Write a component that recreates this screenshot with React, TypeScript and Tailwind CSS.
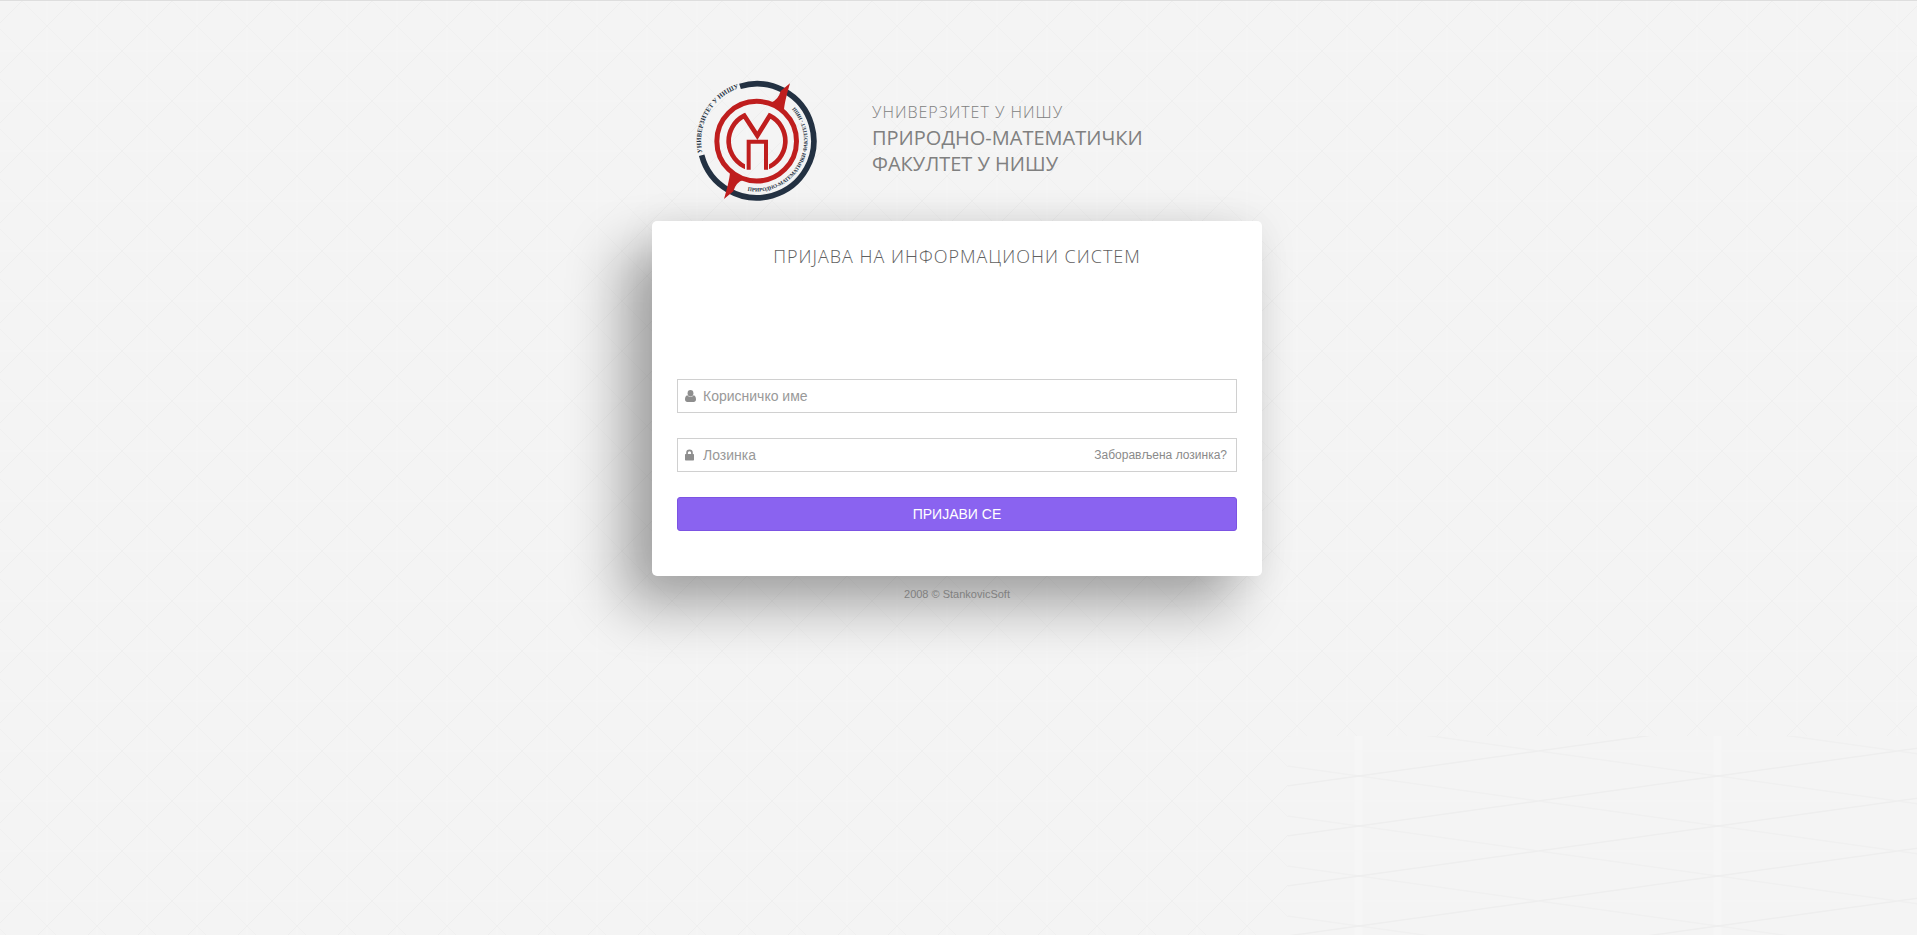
import { FormEvent, useState } from "react";

export default function App() {
  const [username, setUsername] = useState("");
  const [password, setPassword] = useState("");

  const onSubmit = (e: FormEvent) => e.preventDefault();

  return (
    <div className="relative isolate min-h-screen overflow-hidden border-t border-[#dedede] bg-[#f4f4f4] pt-[69px] pr-[19px] pl-4 font-['Liberation_Sans',Arial,sans-serif] text-[#8a8a8a]">
      <Backdrop />
      <div className="mx-auto w-full max-w-[610px]">
        <header className="flex items-center gap-[42px] pl-7 pb-[11px]">
          <Logo />
          <div className="pb-1 font-['Open_Sans',sans-serif] text-[#808080]">
            <p className="text-base leading-[26px] font-light tracking-[1px]">УНИВЕРЗИТЕТ У НИШУ</p>
            <p className="text-xl leading-[26px]">
              ПРИРОДНО-МАТЕМАТИЧКИ
              <br />
              ФАКУЛТЕТ У НИШУ
            </p>
          </div>
        </header>

        <main className="rounded-[5px] bg-white px-[25px] pt-[22px] pb-[45px] shadow-[0_0_40px_rgba(0,0,0,0.07),-30px_30px_55px_rgba(0,0,0,0.32)]">
          <h1 className="mb-[110px] text-center font-['Open_Sans',sans-serif] text-lg leading-[26px] font-light tracking-[1px] text-[#606060]">
            ПРИЈАВА НА ИНФОРМАЦИОНИ СИСТЕМ
          </h1>
          <form onSubmit={onSubmit} className="flex flex-col gap-[25px]">
            <label className="flex h-[34px] items-center border border-[#d0d0d0] px-[7px]">
              <UserIcon />
              <input
                type="text"
                aria-label="Корисничко име"
                placeholder="Корисничко име"
                value={username}
                onChange={(e) => setUsername(e.target.value)}
                className="min-w-0 flex-1 text-sm outline-none placeholder:text-[#999]"
              />
            </label>
            <div className="flex h-[34px] items-center border border-[#d0d0d0] pr-[9px] pl-[7px]">
              <LockIcon />
              <input
                type="password"
                aria-label="Лозинка"
                placeholder="Лозинка"
                value={password}
                onChange={(e) => setPassword(e.target.value)}
                className="min-w-0 flex-1 text-sm outline-none placeholder:text-[#999]"
              />
              <a href="#" className="text-xs">
                Заборављена лозинка?
              </a>
            </div>
            <button
              type="submit"
              className="h-[34px] rounded-[3px] border border-[#7c53e3] bg-[#8a63f0] text-sm text-white"
            >
              ПРИЈАВИ СЕ
            </button>
          </form>
        </main>

        <footer className="py-3 text-center text-[11px] leading-3 text-[#808080]">
          2008 © StankovicSoft
        </footer>
      </div>
    </div>
  );
}

function UserIcon() {
  return (
    <svg viewBox="0 0 11 12" className="mr-[7px] h-3 w-[11px]" fill="#8e8e8e" aria-hidden>
      <ellipse cx="5.5" cy="3.2" rx="2.9" ry="3.2" />
      <path d="M2.4 5.2C3.2 6.2 4.3 6.7 5.5 6.7S7.8 6.2 8.6 5.2C10.400 5.400 11 7.300 11 9.600C11 11.100 10 12 8.700 12H2.300C1 12 0 11.100 0 9.600C0 7.300.6 5.400 2.400 5.200Z" />
    </svg>
  );
}

function LockIcon() {
  return (
    <svg viewBox="0 0 11 12" className="mr-[7px] h-3 w-[11px]" fill="#8e8e8e" aria-hidden>
      <path d="M.7 5H1.2V3.8a3.3 3.3 0 0 1 6.6 0V5H8.3Q9 5 9 5.7V10.8Q9 11.5 8.3 11.5H.7Q0 11.5 0 10.8V5.7Q0 5 .7 5ZM2.9 5H6.1V3.8a1.6 1.6 0 0 0-3.2 0Z" />
    </svg>
  );
}

function Tile({ id, transform }: { id: string; transform: string }) {
  return (
    <pattern id={id} width="50" height="50" patternUnits="userSpaceOnUse" patternTransform={transform}>
      <path d="M25 0V50M0 0H50M0 50H50" stroke="#f6f6f6" strokeWidth="1" />
      <path d="M0 0L50 50" stroke="#f0f0f0" strokeWidth="1" />
      <path d="M50 0L0 50" stroke="#eeeeee" strokeWidth="1" />
    </pattern>
  );
}

function Backdrop() {
  return (
    <div aria-hidden className="absolute inset-0 -z-10">
      <svg className="h-full w-full">
        <defs>
          <Tile id="lattice" transform="translate(22 0)" />
        </defs>
        <rect width="100%" height="100%" fill="url(#lattice)" />
      </svg>
      <svg className="absolute right-0 bottom-0 h-[199px] w-[629px] bg-[#f4f4f4]">
        <defs>
          <Tile id="lattice-wide" transform="translate(-108.5 15) scale(7.18 1)" />
        </defs>
        <rect width="100%" height="100%" fill="url(#lattice-wide)" />
      </svg>
    </div>
  );
}

function Logo() {
  return (
    <svg viewBox="0 0 450 420" className="h-[140px] w-[150px] shrink-0" role="img" aria-label="ПМФ Ниш">
      <defs>
        <path id="ring-outer" d="M67 248A168 168 0 0 1 231 45" />
        <path id="ring-inner" d="M203 362A152 152 0 0 0 340 107" />
        <clipPath id="letter-ends">
          <path d="M130 120H335V299H267V220H195V299H130Z" />
        </clipPath>
      </defs>
      <path d="M180 49A171 171 0 1 1 65 256" fill="none" stroke="#233142" strokeWidth="17" />
      <g fill="#bf1e1e">
        <path d="M330 40L302 63Q295 90 272 98L312 124Q311 105 330 40Z" />
        <path d="M330 40L302 63Q295 90 272 98L312 124Q311 105 330 40Z" transform="rotate(180 231 213.5)" />
      </g>
      <g fill="none" stroke="#bf1e1e">
        <circle cx="230" cy="213.5" r="119.5" strokeWidth="15" />
        <path d="M205 294A85 85 0 0 1 193 137L232 197L269 137A85 85 0 0 1 257 294" strokeWidth="14" clipPath="url(#letter-ends)" />
        <path d="M206 299V215H258V299" strokeWidth="12" />
      </g>
      <g fill="#233142" fontFamily="'Liberation Serif', serif" fontWeight="bold">
        <text fontSize="20">
          <textPath href="#ring-outer">УНИВЕРЗИТЕТ У НИШУ</textPath>
        </text>
        <text fontSize="16">
          <textPath href="#ring-inner">ПРИРОДНО-МАТЕМАТИЧКИ ФАКУЛТЕТ - НИШ</textPath>
        </text>
      </g>
    </svg>
  );
}
